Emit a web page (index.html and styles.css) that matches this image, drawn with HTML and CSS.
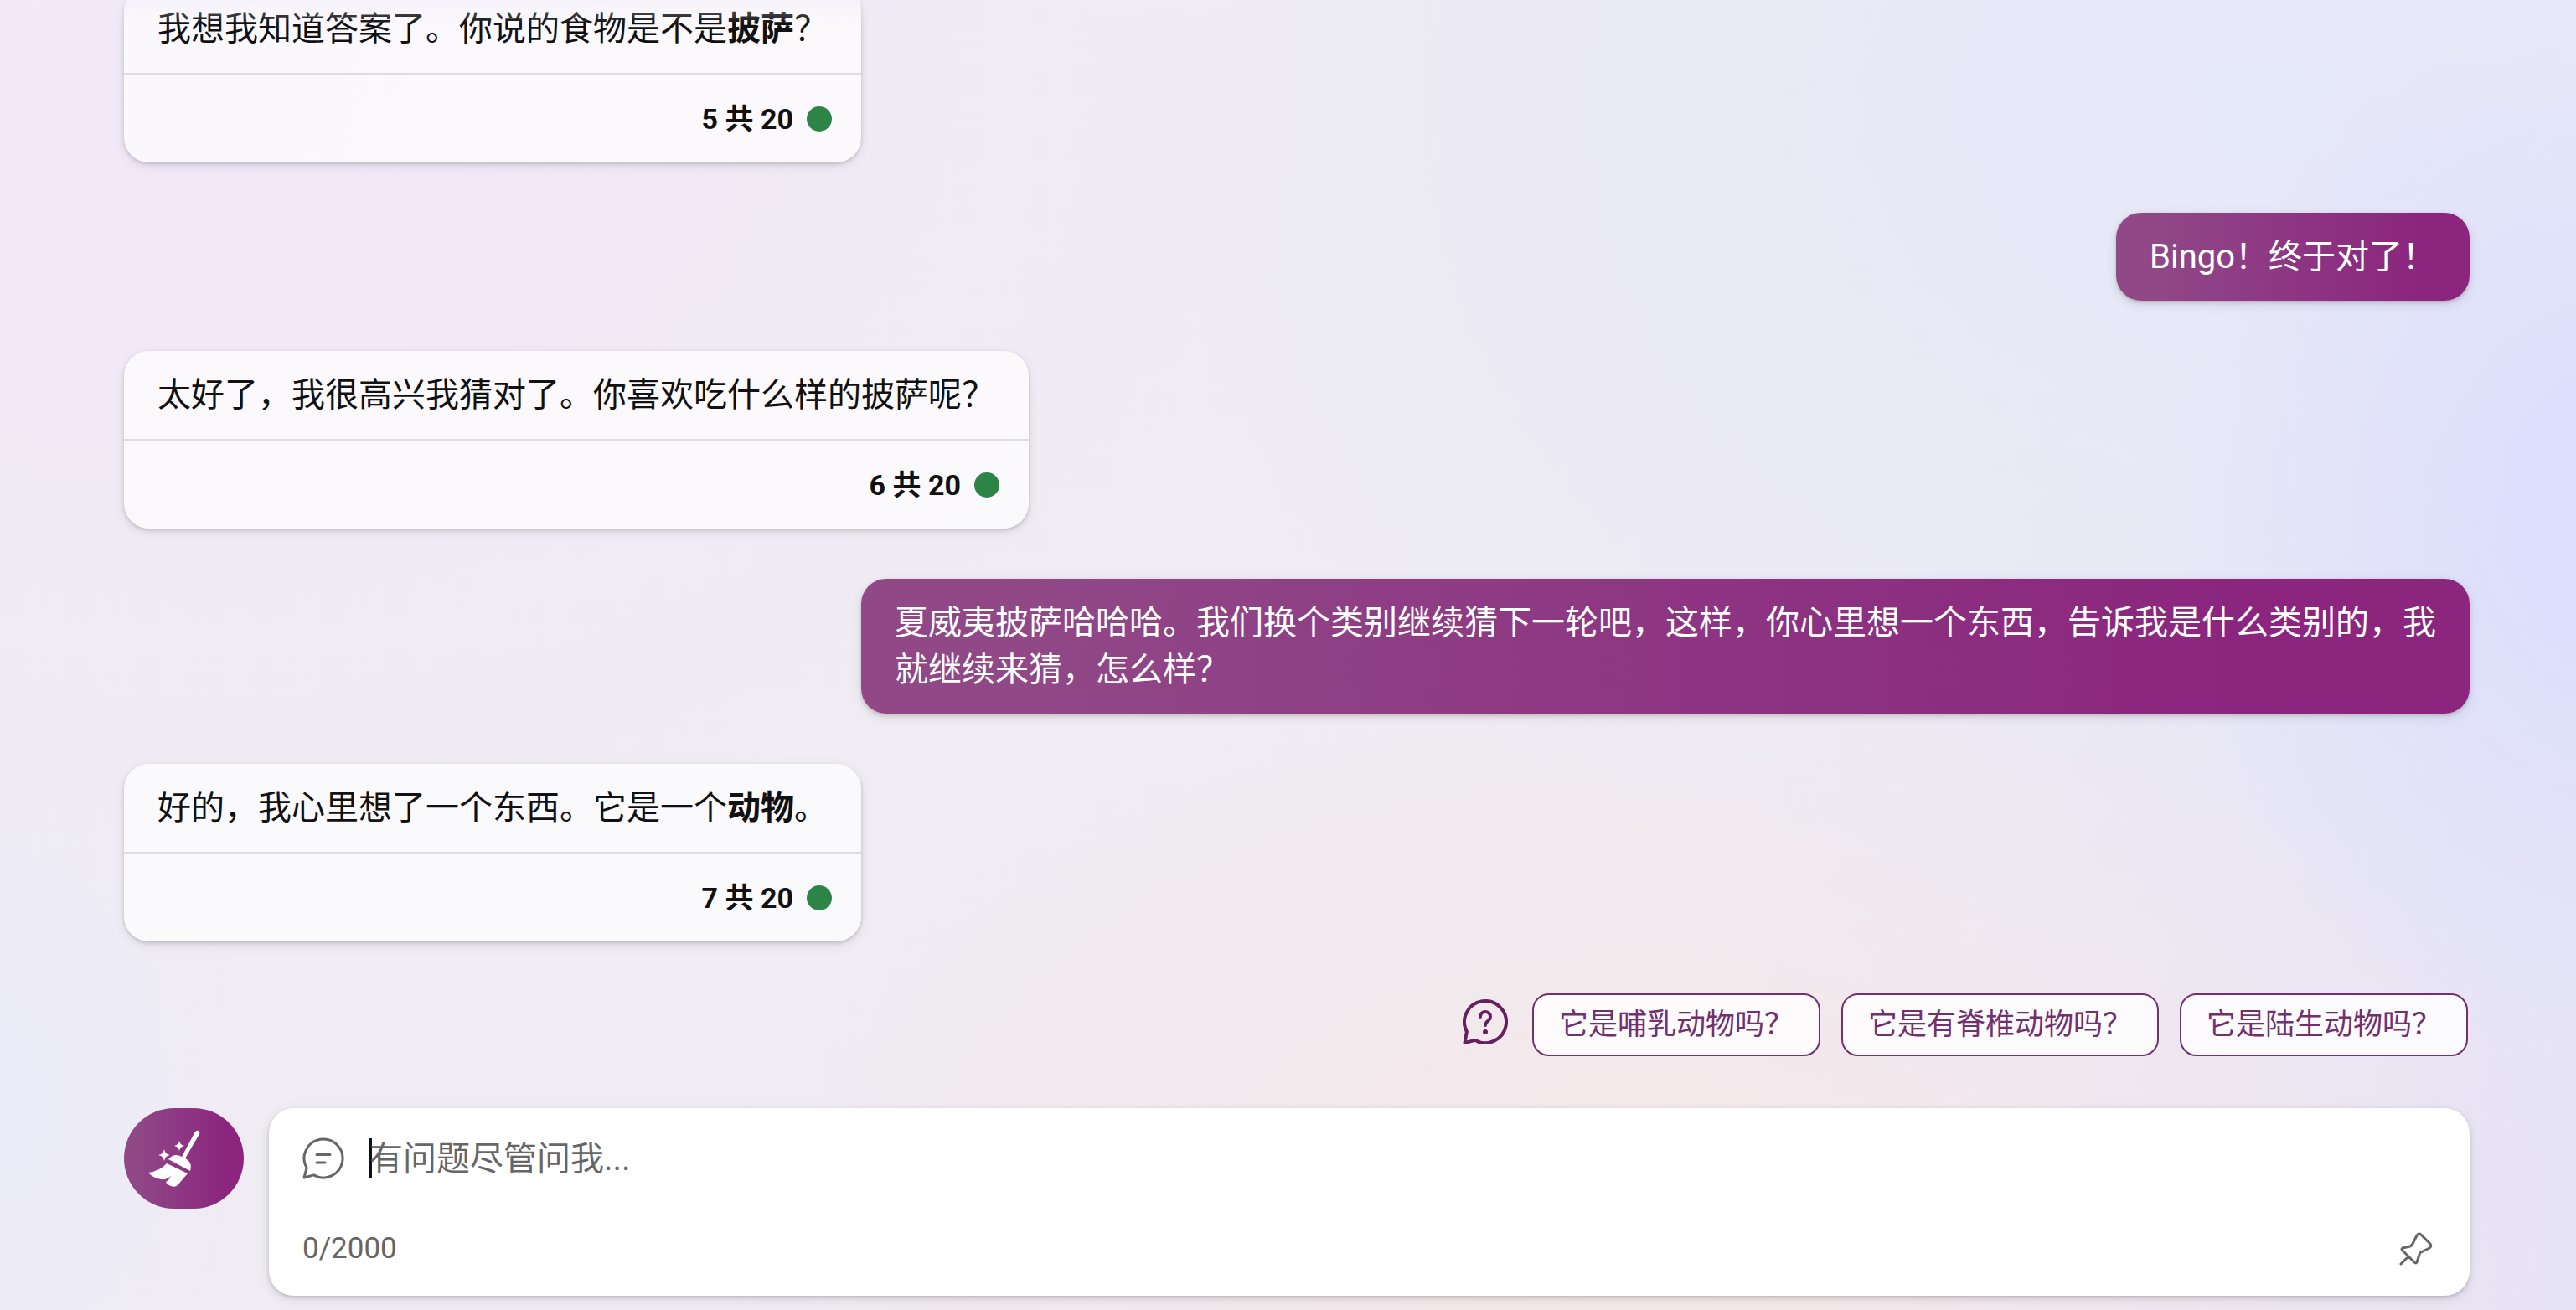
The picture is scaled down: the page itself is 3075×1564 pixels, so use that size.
FILE: index.html
```html
<!DOCTYPE html>
<html lang="zh-CN">
<head>
    <meta charset="UTF-8">
    <meta name="viewport" content="width=device-width, initial-scale=1.0">
    <title>聊天</title>
    <link rel="stylesheet" href="styles.css">
</head>
<body>
    <div class="page">
        <main class="messages">
            <article class="card">
                <p class="card-text">我想我知道答案了。你说的食物是不是<strong>披萨</strong>？</p>
                <div class="card-footer">5 共 20 <span class="dot"></span></div>
            </article>

            <div class="bubble">Bingo！终于对了！</div>

            <article class="card">
                <p class="card-text">太好了，我很高兴我猜对了。你喜欢吃什么样的披萨呢？</p>
                <div class="card-footer">6 共 20 <span class="dot"></span></div>
            </article>

            <div class="bubble">夏威夷披萨哈哈哈。我们换个类别继续猜下一轮吧，这样，你心里想一个东西，告诉我是什么类别的，我就继续来猜，怎么样？</div>

            <article class="card">
                <p class="card-text">好的，我心里想了一个东西。它是一个<strong>动物</strong>。</p>
                <div class="card-footer">7 共 20 <span class="dot"></span></div>
            </article>
        </main>

        <div class="suggestions">
            <svg class="icon-help" viewBox="0 0 54 54" aria-hidden="true">
                <path d="M4.9 38.7A25 25 0 1 1 14.9 48.9L2.5 52Z"/>
                <path d="M21 21C21 13 33 13 33 21C33 26 27 26 27 31"/>
                <circle cx="27" cy="39" r="3"/>
            </svg>
            <button type="button" class="chip">它是哺乳动物吗？</button>
            <button type="button" class="chip">它是有脊椎动物吗？</button>
            <button type="button" class="chip">它是陆生动物吗？</button>
        </div>

        <form class="compose">
            <button type="button" class="new-topic" aria-label="新主题">
                <svg class="icon-broom" viewBox="28 24 88 72" aria-hidden="true">
                    <path d="M85 28Q87 26 89 27Q91 28 90 31L73 60L69 58Z"/>
                    <path d="M53 61Q60 53 69 58Q83 63 79 75Z"/>
                    <path d="M51 66L76 78L64 92Q61 95 56 93Q51 91 50 88Q54 86 56 81Q51 86 44 85Q34 83 29 77Q43 75 51 66Z"/>
                    <path d="M66 39Q67 44 72 45Q67 46 66 51Q65 46 60 45Q65 44 66 39Z"/>
                    <path d="M48 49Q49 55 55 56Q49 57 48 63Q47 57 41 56Q47 55 48 49Z"/>
                </svg>
            </button>
            <div class="input-box">
                <div class="input-row">
                    <label for="question" aria-label="提问">
                        <svg class="icon-chat" viewBox="0 0 50 50" aria-hidden="true">
                            <path d="M5.1 36.5A23 23 0 1 1 13.5 44.9L2 48Z"/>
                            <path d="M17 20.5H33M17 30H27"/>
                        </svg>
                    </label>
                    <span class="caret"></span>
                    <textarea id="question" rows="1" maxlength="2000" placeholder="有问题尽管问我..."></textarea>
                </div>
                <div class="input-footer">
                    <span>0/2000</span>
                    <button type="button" class="pin" aria-label="固定">
                        <svg class="icon-pin" viewBox="0 0 40 40" aria-hidden="true">
                            <path d="M4 19L13 17Q15 16 16 14L21 4Q23 1 26 3L37 14Q39 17 36 19L26 24Q24 25 24 27L21 36Q20 38 18 36L4 22Q2 20 4 19ZM11 29L2 38"/>
                        </svg>
                    </button>
                </div>
            </div>
        </form>
    </div>
</body>
</html>
```
FILE: styles.css
```css
* {
    box-sizing: border-box;
}
body {
    margin: 0;
    font-family: Roboto, "Noto Sans CJK SC", sans-serif;
    font-size: 40px;
    line-height: 56px;
    color: #111;
    background-color: #efecf3;
    background-image:
        radial-gradient(ellipse 18% 42% at 102% 40%, rgba(217, 221, 254, 1), rgba(217, 221, 254, 0)),
        radial-gradient(ellipse 36% 44% at 64% 94%, rgba(246, 232, 233, 1), rgba(246, 232, 233, 0)),
        radial-gradient(ellipse 34% 80% at 100% 90%, rgba(230, 227, 246, 1), rgba(230, 227, 246, 0)),
        radial-gradient(ellipse 44% 70% at 88% 8%, rgba(229, 232, 249, 1), rgba(229, 232, 249, 0)),
        radial-gradient(ellipse 44% 60% at 8% 6%, rgba(242, 232, 248, 1), rgba(242, 232, 248, 0)),
        radial-gradient(ellipse 10% 30% at 0% 84%, rgba(236, 235, 250, 1), rgba(236, 235, 250, 0));
}
.page {
    position: relative;
    display: flex;
    flex-direction: column;
    justify-content: flex-end;
    height: 100vh;
    padding: 0 127px 17px 148px;
    overflow: hidden;
}
/* messages fade out under the top edge */
.page::before {
    content: "";
    position: absolute;
    top: 0;
    left: 0;
    right: 50%;
    z-index: 1;
    height: 28px;
    background: linear-gradient(rgba(241, 235, 248, 0.5), rgba(241, 235, 248, 0));
}
.messages {
    display: flex;
    flex-direction: column;
    align-items: flex-start;
    gap: 60px;
}
.card {
    border-radius: 30px;
    background-color: rgba(255, 255, 255, 0.7);
    box-shadow: 0 2px 4px rgba(0, 0, 0, 0.16), 0 4px 14px rgba(0, 0, 0, 0.08);
}
.card-text {
    margin: 0;
    padding: 25px 40px 24px;
    border-bottom: 2px solid #dedde2;
}
.card-footer {
    display: flex;
    justify-content: flex-end;
    align-items: center;
    gap: 16px;
    padding: 25px 35px 24px;
    font-size: 34px;
    font-weight: bold;
}
.dot {
    width: 30px;
    height: 30px;
    border-radius: 50%;
    background-color: #2d8447;
}
.bubble {
    align-self: flex-end;
    max-width: 48em;
    padding: 25px 40px 24px;
    border-radius: 30px;
    color: #fff;
    background: linear-gradient(90deg, #904887 10%, #8b257e 87%);
    box-shadow: 0 2px 4px rgba(0, 0, 0, 0.16), 0 4px 14px rgba(0, 0, 0, 0.1);
}
button {
    font-family: inherit;
    cursor: pointer;
}
svg {
    display: block;
    flex: none;
}
.suggestions {
    display: flex;
    justify-content: flex-end;
    align-items: center;
    gap: 25px;
    margin: 62px 2px;
}
.icon-help {
    width: 54px;
    height: 54px;
    margin: 0 4px 8px 0;
    fill: none;
    stroke: #66205f;
    stroke-width: 4;
    stroke-linecap: round;
    stroke-linejoin: round;
}
.icon-help circle {
    fill: #66205f;
    stroke: none;
}
.chip {
    height: 75px;
    padding: 0 30px;
    border: 2px solid #742f6d;
    border-radius: 20px;
    background-color: rgba(255, 255, 255, 0.8);
    color: #742f6d;
    font-size: 35px;
    line-height: 48px;
}
.compose {
    display: flex;
    align-items: flex-start;
    gap: 30px;
}
.new-topic {
    display: flex;
    justify-content: center;
    align-items: center;
    width: 143px;
    height: 120px;
    padding: 0;
    border: none;
    border-radius: 60px;
    background: linear-gradient(90deg, #904887 10%, #8b257e 87%);
}
.icon-broom {
    width: 88px;
    height: 72px;
    fill: #fff;
}
.input-box {
    flex: 1;
    padding: 36px 40px 32px;
    border-radius: 30px;
    background-color: #fff;
    box-shadow: 0 2px 4px rgba(0, 0, 0, 0.16), 0 4px 14px rgba(0, 0, 0, 0.1);
}
.input-row {
    display: flex;
    align-items: center;
    height: 48px;
}
.icon-chat {
    width: 50px;
    height: 50px;
    margin-right: 30px;
    fill: none;
    stroke: #666;
    stroke-width: 3;
    stroke-linecap: round;
    stroke-linejoin: round;
}
.caret {
    width: 3px;
    height: 48px;
    margin-right: -3px;
    background-color: #111;
}
textarea {
    flex: 1;
    height: 50px;
    padding: 0;
    border: none;
    outline: none;
    resize: none;
    overflow: hidden;
    background: none;
    color: #111;
    font: inherit;
    line-height: 52px;
}
textarea::placeholder {
    color: #666;
    opacity: 1;
}
.input-footer {
    display: flex;
    justify-content: space-between;
    align-items: center;
    height: 48px;
    margin-top: 60px;
    color: #666;
    font-size: 35px;
}
.pin {
    padding: 4px;
    border: none;
    background: none;
}
.icon-pin {
    width: 40px;
    height: 40px;
    fill: none;
    stroke: #666;
    stroke-width: 3;
    stroke-linecap: round;
    stroke-linejoin: round;
}
```
